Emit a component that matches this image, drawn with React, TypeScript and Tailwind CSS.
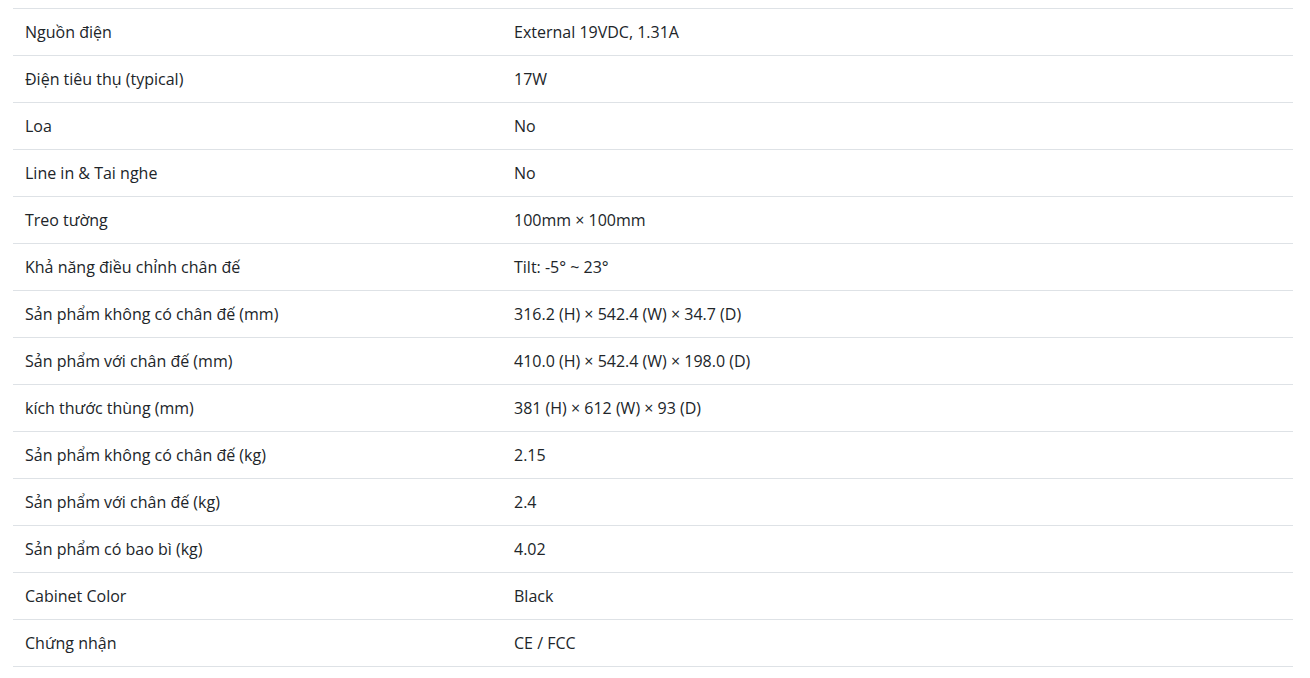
import React from "react";

const rows: [string, string][] = [
  ["Nguồn điện", "External 19VDC, 1.31A"],
  ["Điện tiêu thụ (typical)", "17W"],
  ["Loa", "No"],
  ["Line in & Tai nghe", "No"],
  ["Treo tường", "100mm × 100mm"],
  ["Khả năng điều chỉnh chân đế", "Tilt: -5° ~ 23°"],
  ["Sản phẩm không có chân đế (mm)", "316.2 (H) × 542.4 (W) × 34.7 (D)"],
  ["Sản phẩm với chân đế (mm)", "410.0 (H) × 542.4 (W) × 198.0 (D)"],
  ["kích thước thùng (mm)", "381 (H) × 612 (W) × 93 (D)"],
  ["Sản phẩm không có chân đế (kg)", "2.15"],
  ["Sản phẩm với chân đế (kg)", "2.4"],
  ["Sản phẩm có bao bì (kg)", "4.02"],
  ["Cabinet Color", "Black"],
  ["Chứng nhận", "CE / FCC"],
];

export default function App() {
  return (
    <div
      className="w-[1310px] h-[678px] bg-white pt-[8px] px-[13px] text-[#212529]"
      style={{ fontFamily: '"Open Sans", "Noto Sans", sans-serif' }}
    >
      <div className="w-[1280px] border-b border-[#dee2e6]">
        {rows.map(([k, v]) => (
          <div
            key={k}
            className="flex h-[47px] items-center border-t border-[#dee2e6] text-[16px] leading-[24px]"
          >
            <div className="w-[489px] px-[12px]">{k}</div>
            <div className="flex-1 px-[12px]">{v}</div>
          </div>
        ))}
      </div>
    </div>
  );
}
